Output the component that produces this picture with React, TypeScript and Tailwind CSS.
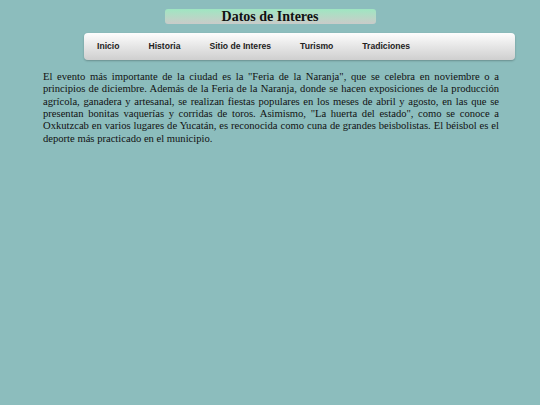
import React from "react";

export default function App() {
  const items = ["Inicio", "Historia", "Sitio de Interes", "Turismo", "Tradiciones"];
  return (
    <div className="w-[540px] h-[405px] bg-[#8cbdbd] overflow-hidden pt-[9px]">
      <div className="mx-auto w-[211px] h-[15px] rounded-[3px] bg-gradient-to-b from-[#9ee6c2] to-[#c9cbc9] flex items-center justify-center">
        <h1 className="text-[14px] leading-none font-bold text-[#111] [font-family:'Liberation_Serif',serif]">Datos de Interes</h1>
      </div>
      <nav className="ml-[84px] mt-[9px] w-[431px] h-[27px] rounded-[4px] bg-gradient-to-b from-[#fdfdfd] to-[#cfcfcf] shadow-[0_1px_2px_rgba(0,0,0,0.25)] flex items-center pl-[13px] gap-[29px]">
        {items.map((t) => (
          <span key={t} className="text-[8.6px] font-bold text-[#222] [font-family:'Liberation_Sans',Arial,sans-serif]">{t}</span>
        ))}
      </nav>
      <p className="ml-[43px] mt-[11px] w-[456px] text-[10.6px] leading-[12.35px] text-justify text-[#111] [font-family:'Liberation_Serif',serif]">
        El evento más importante de la ciudad es la "Feria de la Naranja", que se celebra en noviembre o a principios de diciembre. Además de la Feria de la Naranja, donde se hacen exposiciones de la producción agrícola, ganadera y artesanal, se realizan fiestas populares en los meses de abril y agosto, en las que se presentan bonitas vaquerías y corridas de toros. Asimismo, "La huerta del estado", como se conoce a Oxkutzcab en varios lugares de Yucatán, es reconocida como cuna de grandes beisbolistas. El béisbol es el deporte más practicado en el municipio.
      </p>
    </div>
  );
}
